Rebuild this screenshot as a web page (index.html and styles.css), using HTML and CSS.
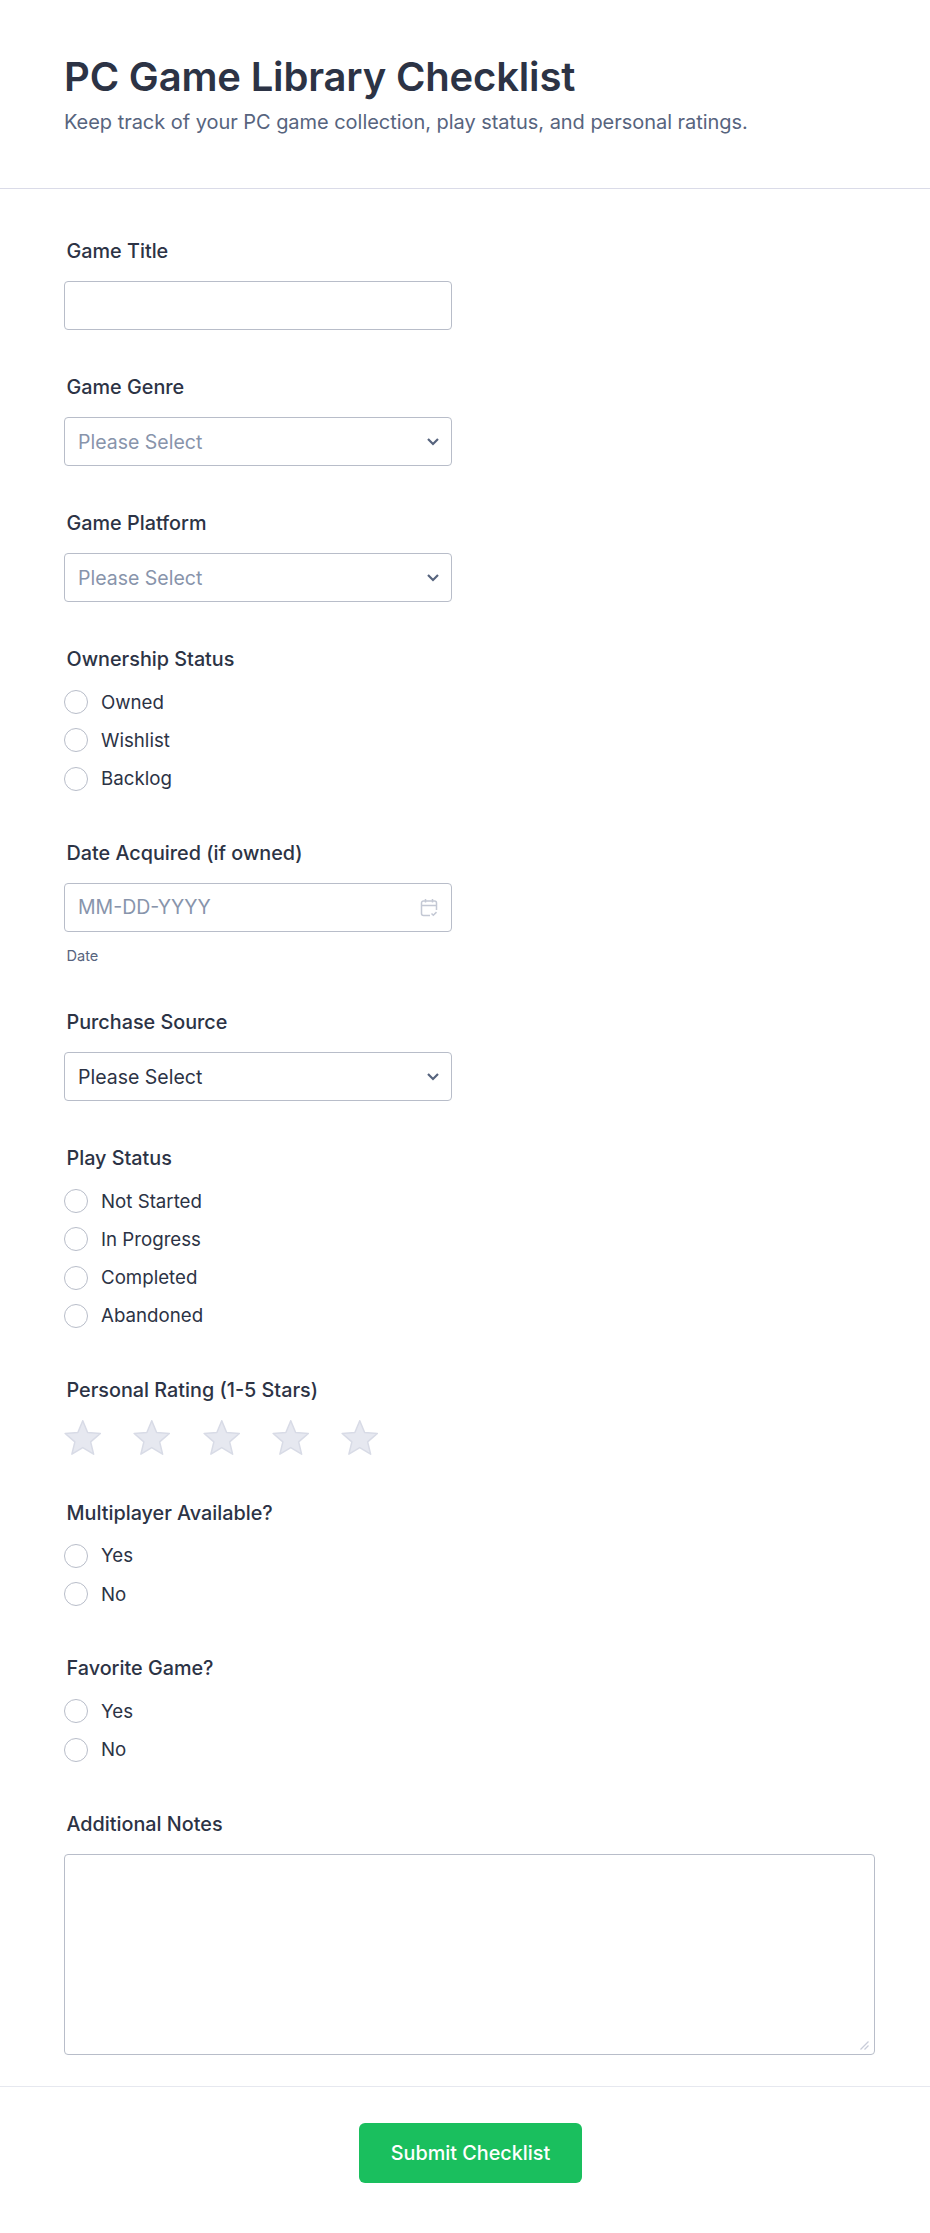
FILE: index.html
```html
<!DOCTYPE html>
<html lang="en">
<head>
  <meta charset="UTF-8">
  <title>PC Game Library Checklist</title>
  <link rel="stylesheet" href="styles.css">
</head>
<body>
  <form class="form">
    <header class="form-header">
      <h1>PC Game Library Checklist</h1>
      <p class="descricao">Keep track of your PC game collection, play status, and personal ratings.</p>
    </header>

    <div class="fields">
      <div class="field">
        <label class="field-label" for="title">Game Title</label>
        <input class="control" type="text" id="title">
      </div>

      <div class="field">
        <label class="field-label" for="genre">Game Genre</label>
        <div class="select-wrap">
          <select class="control empty" id="genre"><option>Please Select</option></select>
          <svg class="chevron" viewBox="0 0 12 8"><path d="M1 1 6 6l5-5"/></svg>
        </div>
      </div>

      <div class="field">
        <label class="field-label" for="platform">Game Platform</label>
        <div class="select-wrap">
          <select class="control empty" id="platform"><option>Please Select</option></select>
          <svg class="chevron" viewBox="0 0 12 8"><path d="M1 1 6 6l5-5"/></svg>
        </div>
      </div>

      <div class="field radios">
        <span class="field-label">Ownership Status</span>
        <label class="radio"><input type="radio" name="own"> Owned</label>
        <label class="radio"><input type="radio" name="own"> Wishlist</label>
        <label class="radio"><input type="radio" name="own"> Backlog</label>
      </div>

      <div class="field">
        <label class="field-label" for="date">Date Acquired (if owned)</label>
        <div class="select-wrap">
          <input class="control" type="text" id="date" placeholder="MM-DD-YYYY">
          <svg class="calendar" viewBox="0 0 18 19">
            <path d="M10 17.500H3.500a2 2 0 0 1-2-2V5a2 2 0 0 1 2-2h11a2 2 0 0 1 2 2v7M1.500 7.500h15M5.500 1v3.500M12.500 1v3.500"/>
            <path d="m11.500 15.500 1.800 1.800 3.200-3.200"/>
          </svg>
        </div>
        <span class="sublabel">Date</span>
      </div>

      <div class="field">
        <label class="field-label" for="source">Purchase Source</label>
        <div class="select-wrap">
          <select class="control" id="source"><option>Please Select</option></select>
          <svg class="chevron" viewBox="0 0 12 8"><path d="M1 1 6 6l5-5"/></svg>
        </div>
      </div>

      <div class="field radios">
        <span class="field-label">Play Status</span>
        <label class="radio"><input type="radio" name="play"> Not Started</label>
        <label class="radio"><input type="radio" name="play"> In Progress</label>
        <label class="radio"><input type="radio" name="play"> Completed</label>
        <label class="radio"><input type="radio" name="play"> Abandoned</label>
      </div>

      <div class="field">
        <span class="field-label">Personal Rating (1-5 Stars)</span>
        <div class="stars">
          <svg class="star" viewBox="0 0 38 36"><path d="M18.750.750 23.630 12.540 36.340 13.530 26.640 21.810 29.620 34.220 18.750 27.550 7.880 34.220 10.860 21.810 1.160 13.530 13.870 12.540Z"/></svg>
          <svg class="star" viewBox="0 0 38 36"><path d="M18.750.750 23.630 12.540 36.340 13.530 26.640 21.810 29.620 34.220 18.750 27.550 7.880 34.220 10.860 21.810 1.160 13.530 13.870 12.540Z"/></svg>
          <svg class="star" viewBox="0 0 38 36"><path d="M18.750.750 23.630 12.540 36.340 13.530 26.640 21.810 29.620 34.220 18.750 27.550 7.880 34.220 10.860 21.810 1.160 13.530 13.870 12.540Z"/></svg>
          <svg class="star" viewBox="0 0 38 36"><path d="M18.750.750 23.630 12.540 36.340 13.530 26.640 21.810 29.620 34.220 18.750 27.550 7.880 34.220 10.860 21.810 1.160 13.530 13.870 12.540Z"/></svg>
          <svg class="star" viewBox="0 0 38 36"><path d="M18.750.750 23.630 12.540 36.340 13.530 26.640 21.810 29.620 34.220 18.750 27.550 7.880 34.220 10.860 21.810 1.160 13.530 13.870 12.540Z"/></svg>
        </div>
      </div>

      <div class="field radios">
        <span class="field-label">Multiplayer Available?</span>
        <label class="radio"><input type="radio" name="multi"> Yes</label>
        <label class="radio"><input type="radio" name="multi"> No</label>
      </div>

      <div class="field radios">
        <span class="field-label">Favorite Game?</span>
        <label class="radio"><input type="radio" name="fav"> Yes</label>
        <label class="radio"><input type="radio" name="fav"> No</label>
      </div>

      <div class="field notes">
        <label class="field-label" for="notes">Additional Notes</label>
        <div class="notes-wrap">
          <textarea class="control" id="notes"></textarea>
          <svg class="resizer" viewBox="0 0 9 9"><path d="M.5 8.500 8.500.5M4.500 8.500l4-4"/></svg>
        </div>
      </div>
    </div>

    <footer class="form-footer">
      <button type="button">Submit Checklist</button>
    </footer>
  </form>
</body>
</html>
```

FILE: styles.css
```css
* { box-sizing: border-box; }
body { margin: 0; background: #fff; color: #2c3345; font-family: Inter, Arial, sans-serif; }
.form { width: 930px; }

.form-header { height: 189px; padding: 53px 64px 0; border-bottom: 1px solid #dadbe8; }
h1 { margin: 0; font-size: 40px; line-height: 48px; font-weight: 600; letter-spacing: -0.17px; }
.descricao { margin: 9px 0 0; font-size: 20px; line-height: 24px; color: #57647e; letter-spacing: -0.04px; }

.fields { padding: 50px 64px 0; }
.field { margin-bottom: 45px; }
.field-label { display: block; margin: 0 0 18px 2.500px; font-size: 19.800px; line-height: 24px; font-weight: 500; }

.control { display: block; width: 388px; height: 49px; padding: 0 13px; background: #fff; border: 1px solid #b8bdc9; border-radius: 4px; color: #2c3345; font: 19.500px Inter, Arial, sans-serif; outline: none; appearance: none; }
.control::placeholder { color: #8894ab; }
.control.empty { color: #8894ab; }
.select-wrap { position: relative; width: 388px; }
.chevron { position: absolute; top: 21px; right: 13px; width: 12px; height: 8px; fill: none; stroke: #57647e; stroke-width: 2.200; }
.calendar { position: absolute; top: 15px; right: 14px; width: 18px; height: 19px; fill: none; stroke: #c3c8d4; stroke-width: 1.500; }
.sublabel { display: block; margin: 14px 0 -0.670px 2.500px; font-size: 14.600px; line-height: 20px; color: #57647e; }

.radios { margin-bottom: 50px; }
.radios .field-label { margin-bottom: 19px; }
.radio { display: flex; align-items: center; gap: 13px; height: 24px; margin-bottom: 14.330px; font-size: 18.700px; }
.radio:last-child { margin-bottom: 0; }
.radio input { width: 24px; height: 24px; margin: 0; background: #fff; border: 1px solid #b8bdc9; border-radius: 50%; appearance: none; }

.stars { display: flex; gap: 31.300px; margin-top: 19px; }
.field-label + .stars { margin-top: 1px; }
.star { width: 38px; height: 36px; fill: #e6e8f0; stroke: #d8dbe6; stroke-width: 1.500; stroke-linejoin: round; }

.notes { margin-bottom: 31px; }
.notes-wrap { position: relative; width: 811px; }
.notes textarea { width: 811px; height: 201px; resize: none; }
.resizer { position: absolute; right: 6px; bottom: 5px; width: 9px; height: 9px; fill: none; stroke: #c8ccd9; stroke-width: 1.200; }

.form-footer { display: flex; justify-content: center; padding: 36px 0 0 11px; height: 146px; border-top: 1px solid #e6e8ef; }
button { width: 223px; height: 60px; background: #1abf5e; color: #fff; border: none; border-radius: 6px; font: 500 19.800px Inter, Arial, sans-serif; cursor: pointer; }
```
